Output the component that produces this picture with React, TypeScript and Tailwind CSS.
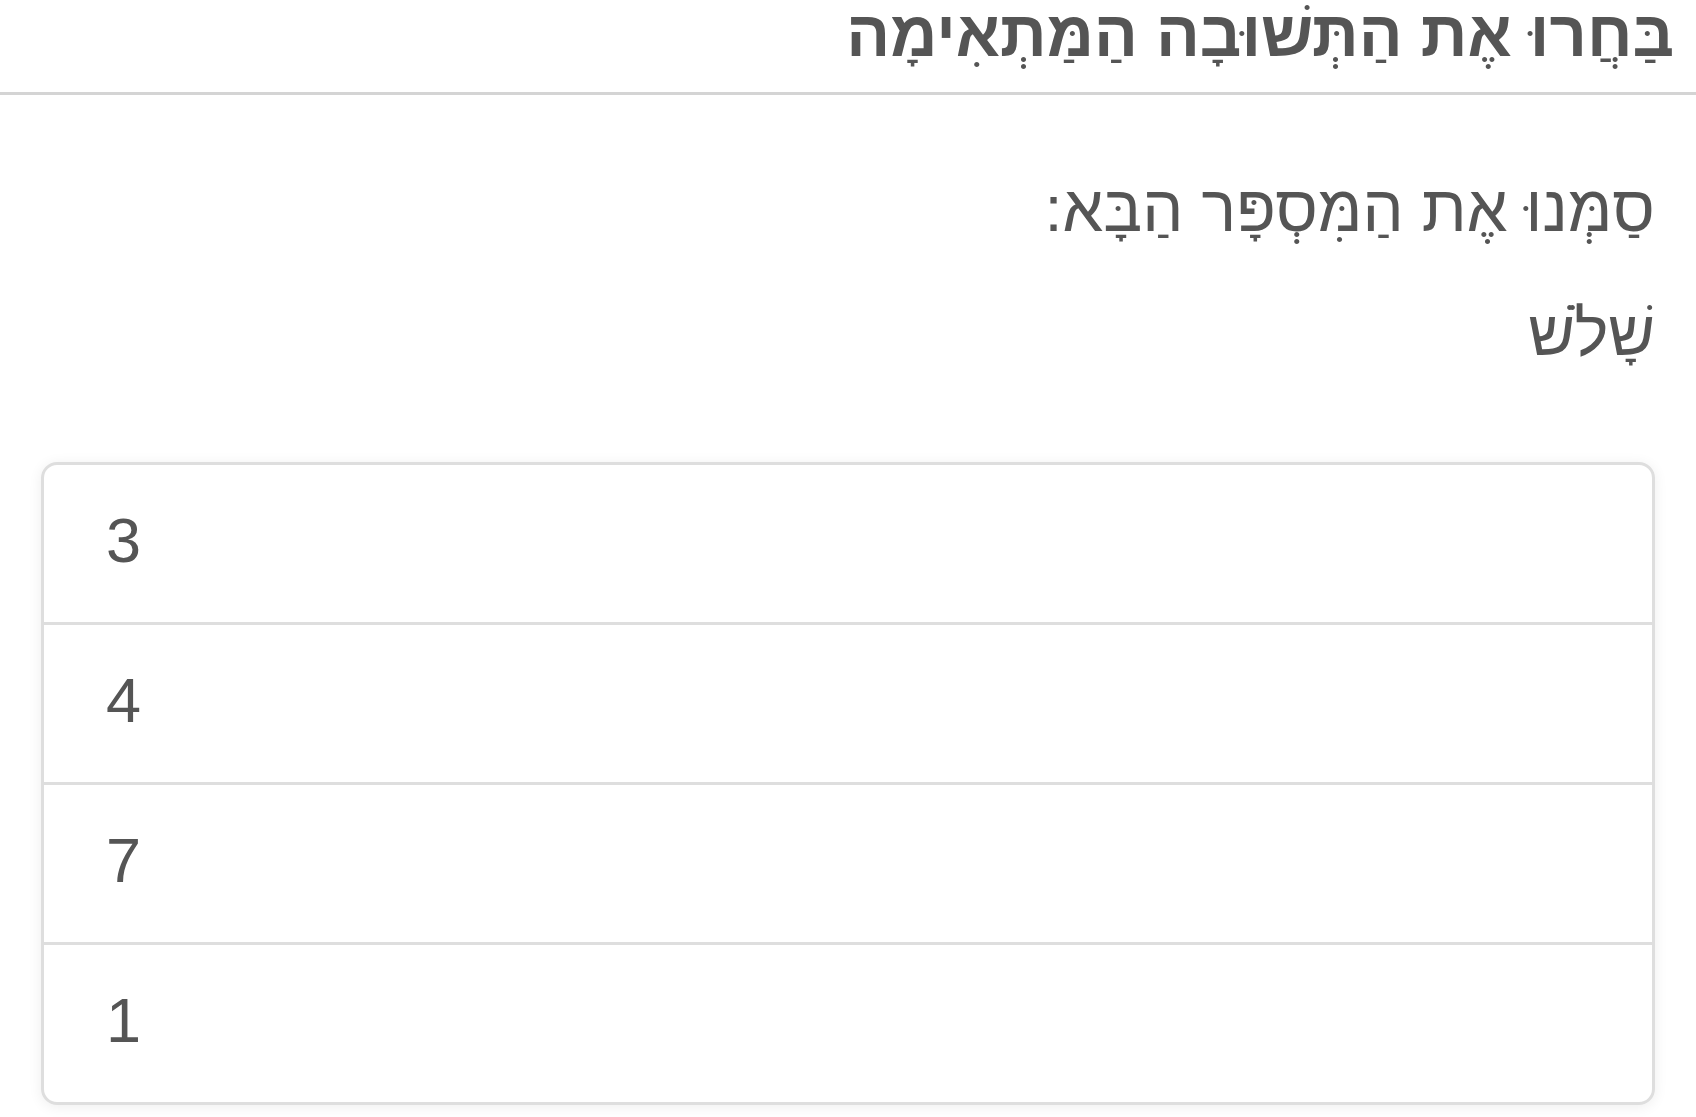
import React from "react";

const options = ["3", "4", "7", "1"];

export default function App() {
  return (
    <div dir="rtl" className="min-h-screen bg-white text-[#555] font-['Liberation_Sans',Arial,sans-serif]">
      <div className="h-[95px] border-b-[3px] border-[#d4d4d4] pr-[22px] flex items-start">
        <h1 className="text-[65px] font-bold leading-none mt-[1px]">בַּחֲרוּ אֶת הַתְּשׁוּבָה הַמַּתְאִימָה</h1>
      </div>

      <div className="px-[41px]">
        <p className="text-[65px] leading-none mt-[81px]">סַמְּנוּ אֶת הַמִּסְפָּר הַבָּא:</p>
        <p className="text-[64px] leading-none mt-[60px]">שָׁלֹשׁ</p>

        <div dir="ltr" className="mt-[97px] rounded-2xl border-[3px] border-[#dedede] shadow-[0_2px_14px_rgba(0,0,0,0.07)] overflow-hidden">
          {options.map((opt, i) => (
            <div
              key={opt}
              className={"flex items-center pl-[62px] pb-[7px] text-[63px] " + (i > 0 ? "h-[160px] border-t-[3px] border-[#dedede]" : "h-[157px]")}
            >
              {opt}
            </div>
          ))}
        </div>
      </div>
    </div>
  );
}
